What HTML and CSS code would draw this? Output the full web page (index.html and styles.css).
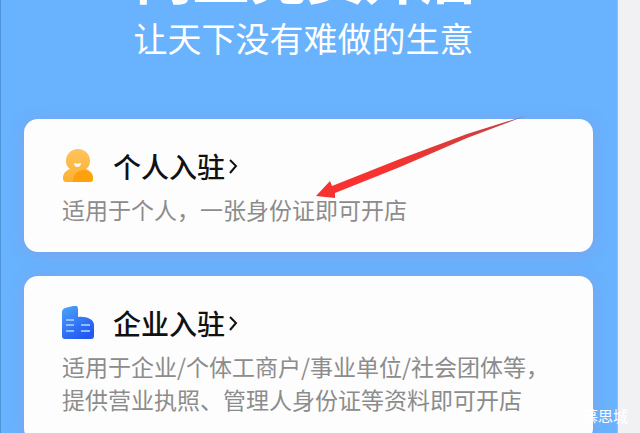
FILE: index.html
```
<!DOCTYPE html>
<html lang="zh-CN">
<head>
<meta charset="utf-8">
<meta name="viewport" content="width=device-width,initial-scale=1.0">
<title>网上免费开店</title>
<link rel="stylesheet" href="styles.css">
</head>
<body>
<div class="page">
  <main class="screen">
    <header class="hero">
      <h1>网上免费开店</h1>
      <p>让天下没有难做的生意</p>
    </header>

    <section class="card">
      <h2>
        <svg class="icon" viewBox="0 0 32 34" aria-hidden="true">
          <defs>
            <linearGradient id="head" x1="0" y1="0" x2="0" y2="1"><stop offset="0" stop-color="#ffc35c"/><stop offset="1" stop-color="#fdb02f"/></linearGradient>
            <linearGradient id="arm" x1="0" y1="0" x2="1" y2="1"><stop offset="0" stop-color="#fd9d13"/><stop offset="1" stop-color="#ffa406"/></linearGradient>
          </defs>
          <path fill="url(#head)" d="M16 0C9 0 4 5 4 12c0 3 1 6 4 8-5 2-7 5-7 9 0 3 1 4 4 4h22c3 0 4-1 4-4 0-4-2-7-7-9 3-2 4-5 4-8C28 5 23 0 16 0z"/>
          <path fill="url(#arm)" d="M11 33c0-7 4-12 11-12 5 0 9 4 9 8 0 3-1 4-4 4z"/>
          <path fill="#fff" d="M12 14c2 1 5 1 7 0 0 3-2 4-3.500 4S12 17 12 14z"/>
        </svg>
        <a href="#personal">个人入驻<svg class="chevron" viewBox="0 0 10 18" aria-hidden="true"><path d="M2 3l6 6-6 7"/></svg></a>
      </h2>
      <p>适用于个人，一张身份证即可开店</p>
      <svg class="arrow" viewBox="0 0 214 86" aria-hidden="true">
        <defs><linearGradient id="tail" x1="0" x2="1"><stop offset="0.300" stop-color="#f83230"/><stop offset="0.900" stop-color="#c9413f"/><stop offset="1" stop-color="#9a6fb4"/></linearGradient></defs>
        <path fill="url(#tail)" d="M0 81L14 66 16 71 84 44 151 19 212 0 151 23 84 52 19 78 19 83z"/>
      </svg>
    </section>

    <section class="card">
      <h2>
        <svg class="icon" viewBox="0 0 32 34" aria-hidden="true">
          <defs><linearGradient id="tower" x1="0" y1="0" x2="0.600" y2="1"><stop offset="0" stop-color="#4ba5fa"/><stop offset="1" stop-color="#2458f3"/></linearGradient></defs>
          <path fill="url(#tower)" d="M0 6c0-2 1-3 3-4l8-2c3-1 5 0 5 3v8c8-1 16 2 16 8v11c0 2-1 3-3 3H3c-2 0-3-1-3-3z"/>
          <path stroke="#8cc0fc" stroke-width="2" d="M4 14h8M4 19h8M4 25h8M19 19h9M19 25h9"/>
        </svg>
        <a href="#company">企业入驻<svg class="chevron" viewBox="0 0 10 18" aria-hidden="true"><path d="M2 3l6 6-6 7"/></svg></a>
      </h2>
      <p>适用于企业/个体工商户/事业单位/社会团体等，<br>提供营业执照、管理人身份证等资料即可开店</p>
    </section>
  </main>
</div>
<div class="watermark">慕思城</div>
</body>
</html>
```

FILE: styles.css
```
*{ box-sizing:border-box; }
html,body{ height:100%; }
body{ margin:0; overflow:hidden; position:relative; background:#f1f1f3; font-family:"Noto Sans CJK SC",sans-serif; }
h1,h2,p{ margin:0; font-weight:400; }
.page{ min-height:100%; padding-right:22px; }
.screen{ min-height:100vh; padding:0 24px 24px 23px; border-left:1px solid #4f93d8; border-right:1px solid #8fbdf0; background:#68b2fe; }
.hero{ display:flow-root; height:119px; padding-right:10px; color:#fff; text-align:center; white-space:nowrap; }
.hero h1{ margin:-58px 0 8px; padding-left:6px; font-size:57px; font-weight:700; line-height:64px; }
.hero p{ font-size:34px; line-height:48px; }
.card{ position:relative; margin-bottom:24px; padding:27px 38px 26px; border-radius:14px; background:#fdfdfd; box-shadow:0 2px 14px rgba(150,150,210,0.5); }
.card h2{ display:flex; align-items:center; gap:19px; height:40px; font-size:28px; line-height:40px; }
.card h2 a{ display:flex; align-items:center; gap:3px; color:#111; font-weight:500; text-decoration:none; white-space:nowrap; }
.card p{ padding-top:7px; color:#8c8c8c; font-size:23px; line-height:33px; white-space:nowrap; }
.icon{ width:32px; height:34px; flex:none; }
.chevron{ width:10px; height:18px; fill:none; stroke:#111; stroke-width:2; }
.arrow{ position:absolute; left:292px; top:-4px; width:214px; height:86px; }
.watermark{ position:absolute; right:12px; bottom:6px; color:#fff; font-size:15px; line-height:22px; }
```
